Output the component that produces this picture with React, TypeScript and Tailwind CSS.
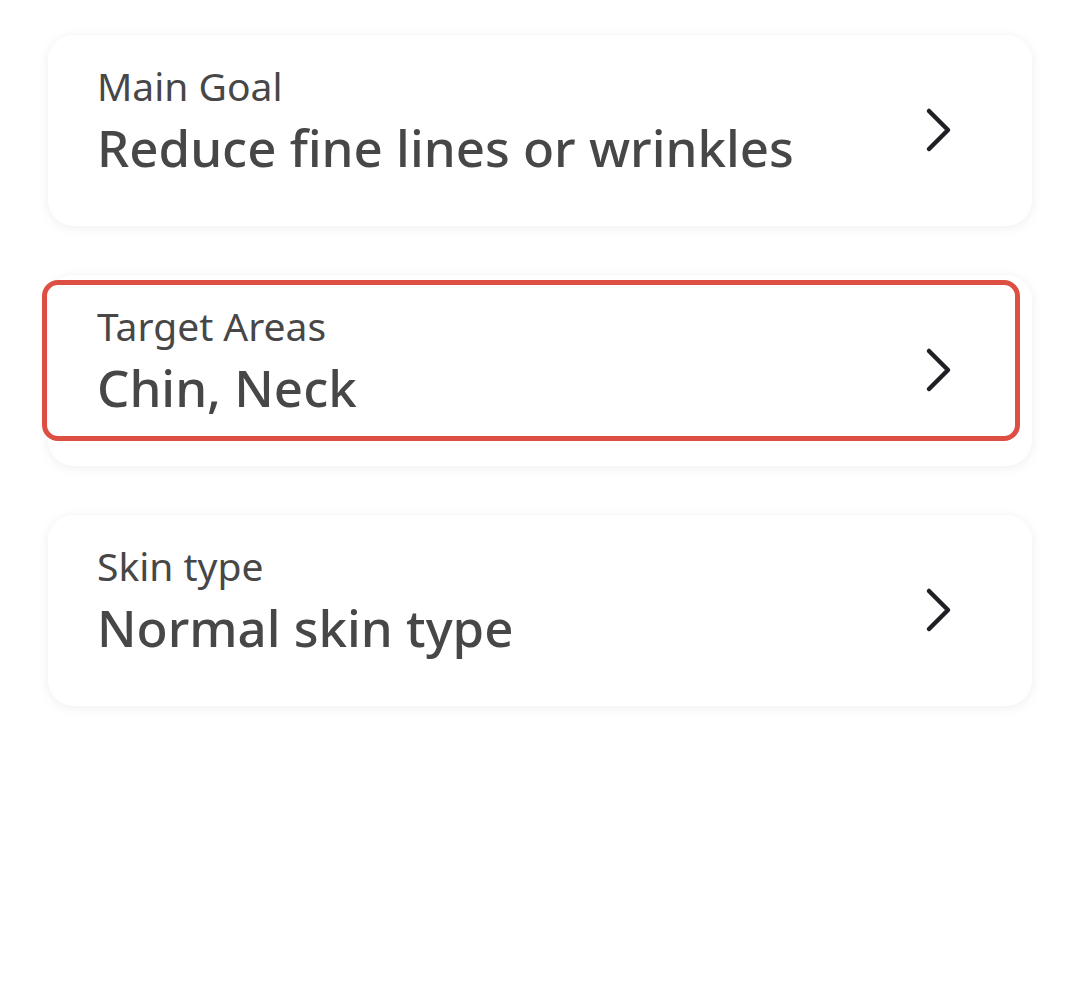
import React from "react";

function Chevron() {
  return (
    <svg width="30" height="48" viewBox="0 0 30 48" fill="none" className="shrink-0">
      <path d="M5 5 L24 24 L5 43" stroke="#1f2125" strokeWidth="4.5" strokeLinecap="round" strokeLinejoin="round" />
    </svg>
  );
}

function Card({ label, value, highlighted }: { label: string; value: string; highlighted?: boolean }) {
  return (
    <div className="relative">
      <div className="flex h-[191px] items-start justify-between rounded-[26px] bg-white pl-[49px] pr-[78px] pt-[29px] shadow-[0_2px_12px_rgba(0,0,0,0.07)]">
        <div className="flex flex-col">
          <span className="text-[39px] leading-[44px] text-[#474747]">{label}</span>
          <span className="mt-[9px] text-[51px] leading-[60px] font-medium text-[#474747]">{value}</span>
        </div>
        <div className="mt-[42px]">
          <Chevron />
        </div>
      </div>
      {highlighted && (
        <div className="pointer-events-none absolute left-[-6px] top-[5px] h-[161px] w-[978px] rounded-[16px] border-[5px] border-[#dd4f43]" />
      )}
    </div>
  );
}

export default function App() {
  return (
    <div className="min-h-[992px] w-[1080px] bg-white pt-[35px] pl-[48px] pr-[48px]" style={{ fontFamily: '"Noto Sans", sans-serif' }}>
      <div className="flex flex-col gap-[49px]">
        <Card label="Main Goal" value="Reduce fine lines or wrinkles" />
        <Card label="Target Areas" value="Chin, Neck" highlighted />
        <Card label="Skin type" value="Normal skin type" />
      </div>
    </div>
  );
}
